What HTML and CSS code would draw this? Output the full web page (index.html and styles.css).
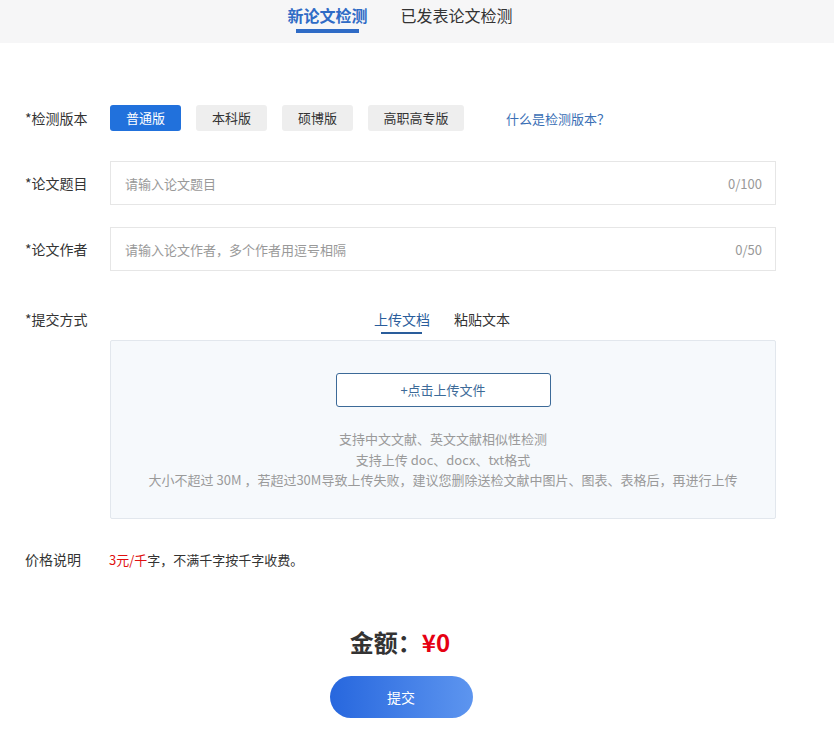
FILE: index.html
```html
<!DOCTYPE html>
<html lang="zh-CN">
<head>
  <meta charset="UTF-8">
  <title>论文检测</title>
  <link rel="stylesheet" href="styles.css">
</head>
<body>
<div class="topbar">
  <div class="top-tab active">新论文检测</div>
  <div class="top-tab">已发表论文检测</div>
</div>

<div class="form">
  <div class="row row-version">
    <div class="label">*检测版本</div>
    <div class="versions">
      <span class="ver active">普通版</span>
      <span class="ver">本科版</span>
      <span class="ver">硕博版</span>
      <span class="ver wide">高职高专版</span>
      <a class="what" href="#">什么是检测版本？</a>
    </div>
  </div>

  <div class="row row-input">
    <div class="label">*论文题目</div>
    <div class="field">
      <span class="placeholder">请输入论文题目</span>
      <span class="count">0/100</span>
    </div>
  </div>

  <div class="row row-input">
    <div class="label">*论文作者</div>
    <div class="field">
      <span class="placeholder">请输入论文作者，多个作者用逗号相隔</span>
      <span class="count">0/50</span>
    </div>
  </div>

  <div class="row row-submit">
    <div class="label">*提交方式</div>
    <div class="submit-area">
      <div class="sub-tabs">
        <span class="sub-tab active">上传文档</span>
        <span class="sub-tab">粘贴文本</span>
      </div>
      <div class="upload-box">
        <div class="upload-btn">+点击上传文件</div>
        <div class="tips">
          <p>支持中文文献、英文文献相似性检测</p>
          <p>支持上传 doc、docx、txt格式</p>
          <p>大小不超过 30M ，若超过30M导致上传失败，建议您删除送检文献中图片、图表、表格后，再进行上传</p>
        </div>
      </div>
    </div>
  </div>

  <div class="row row-price">
    <div class="label">价格说明</div>
    <div class="price-text"><span class="red">3元/千</span>字，不满千字按千字收费。</div>
  </div>
</div>

<div class="total">金额：<span class="red">¥0</span></div>
<div class="submit-wrap">
  <button class="submit">提交</button>
</div>
</body>
</html>
```

FILE: styles.css
```css
body {
  margin: 0;
  background: #ffffff;
  font-family: "Microsoft YaHei", "Noto Sans CJK SC", sans-serif;
  color: #333333;
  font-size: 13px;
}
.topbar {
  height: 43px;
  background: #f6f6f7;
  display: flex;
  justify-content: center;
  gap: 33px;
  padding-right: 34px;
}
.top-tab {
  font-size: 16px;
  line-height: 30px;
  color: #333333;
  position: relative;
  height: 43px;
}
.top-tab.active {
  color: #2f6bc6;
  font-weight: bold;
}
.top-tab.active::after {
  content: "";
  position: absolute;
  left: 9px;
  right: 9px;
  top: 29px;
  height: 4px;
  background: #2f6bc6;
}
.form {
  padding: 62px 58px 0 25px;
}
.row {
  display: flex;
  align-items: center;
}
.label {
  width: 85px;
  flex: none;
  font-size: 14px;
  color: #333333;
}
.versions {
  display: flex;
  align-items: center;
  gap: 15px;
}
.ver {
  width: 71px;
  height: 26px;
  line-height: 26px;
  text-align: center;
  background: #eeeeee;
  border-radius: 3px;
  color: #333333;
}
.ver.active {
  background: #2171dc;
  color: #ffffff;
}
.ver.wide {
  width: 96px;
}
.what {
  margin-left: 27px;
  color: #3a6fb5;
  text-decoration: none;
}
.row-input {
  margin-top: 30px;
}
.row-input + .row-input {
  margin-top: 22px;
}
.field {
  flex: 1;
  height: 42px;
  border: 1px solid #e6e6e6;
  display: flex;
  align-items: center;
  justify-content: space-between;
  padding: 0 13px 0 14px;
}
.placeholder {
  color: #999999;
}
.count {
  color: #999999;
}
.row-submit {
  align-items: flex-start;
  margin-top: 38px;
}
.row-submit .label {
  line-height: 20px;
}
.submit-area {
  flex: 1;
}
.sub-tabs {
  display: flex;
  justify-content: center;
  gap: 24px;
  height: 24px;
  margin-right: 2px;
}
.sub-tab {
  position: relative;
  font-size: 14px;
  line-height: 20px;
  color: #333333;
}
.sub-tab.active {
  color: #2a5d9b;
}
.sub-tab.active::after {
  content: "";
  position: absolute;
  left: 7px;
  right: 8px;
  top: 23px;
  height: 2px;
  background: #2a5d9b;
}
.upload-box {
  margin-top: 7px;
  height: 177px;
  background: #f6f9fc;
  border: 1px solid #e2e7ed;
  border-radius: 2px;
  display: flex;
  flex-direction: column;
  align-items: center;
}
.upload-btn {
  margin-top: 32px;
  width: 213px;
  height: 32px;
  line-height: 32px;
  text-align: center;
  border: 1px solid #3c6a98;
  border-radius: 3px;
  background: #ffffff;
  color: #3c6a98;
}
.tips {
  margin-top: 22px;
  text-align: center;
  color: #9a9a9a;
}
.tips p {
  margin: 0;
  line-height: 20.5px;
}
.row-price {
  margin-top: 30px;
}
.row-price .label {
  width: 84px;
}
.red {
  color: #e01010;
}
.total {
  margin-top: 57px;
  text-align: center;
  font-size: 24px;
  font-weight: bold;
  color: #333333;
  line-height: 32px;
  padding-right: 34px;
}
.total .red {
  color: #e60012;
}
.submit-wrap {
  margin-top: 18px;
  display: flex;
  justify-content: center;
  padding-right: 32px;
}
.submit {
  width: 143px;
  height: 42px;
  border: none;
  border-radius: 21px;
  background: linear-gradient(90deg, #2767de, #5d95ef);
  color: #ffffff;
  font-size: 14px;
  font-family: inherit;
}
```
